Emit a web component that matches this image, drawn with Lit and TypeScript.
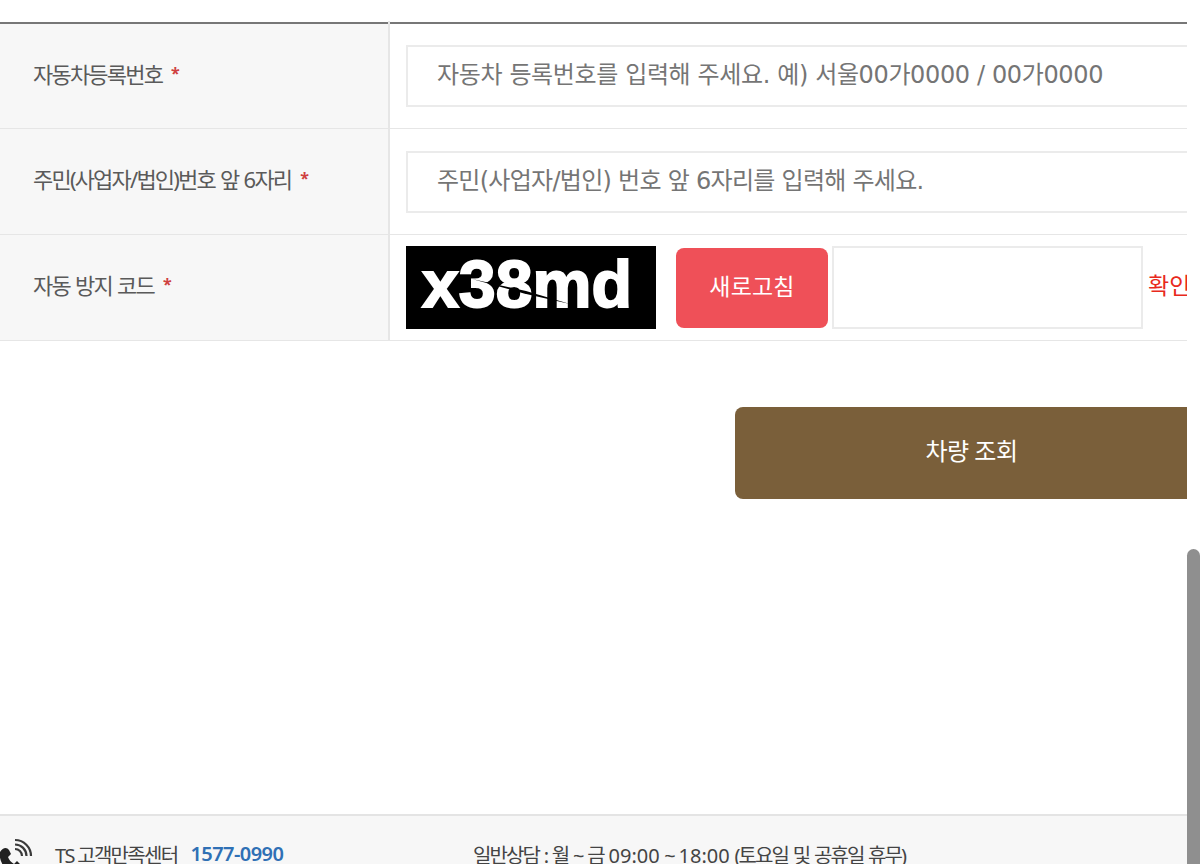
import { LitElement, html, css } from "lit";
import { customElement } from "lit/decorators.js";

@customElement("app-root")
export class AppRoot extends LitElement {
  static styles = css`
    :host { display: block; height: 864px; overflow: hidden; position: relative; background: #fff;
      font-family: "Noto Sans", "Noto Sans CJK KR", sans-serif; color: #555; }
    .page { width: 1187px; height: 864px; overflow: hidden; display: flex; flex-direction: column; }
    .table { margin-top: 22px; border-top: 2px solid #777; }
    .row { display: grid; grid-template-columns: 388px 2px 1fr; height: 105px; border-bottom: 1px solid #e6e6e6; box-sizing: content-box; }
    .row:first-child { height: 104px; }
    .row:first-child .sep { margin-top: -3px; }
    .row:first-child .td { padding-top: 21px; }
    .th { background: #f7f7f7; display: flex; align-items: center; padding-left: 33px; padding-bottom: 7px; font-size: 22px; letter-spacing: -1.8px; word-spacing: 1.2px; color: #5a5a5a; box-sizing: border-box; white-space: nowrap; }
    .star { color: #cf4040; font-size: 16px; font-weight: 700; margin-left: 9px; letter-spacing: 0; }
    .sep { background: #e6e6e6; }
    .td { padding: 22px 0 0 16px; min-width: 0; overflow: hidden; }
    input { display: block; box-sizing: border-box; border: 2px solid #ebebeb; background: #fff; font: inherit; outline: none; }
    .wide { width: 900px; height: 62px; padding: 0 0 2px 29px; font-size: 24px; font-family: "DejaVu Sans", "Noto Sans CJK KR", sans-serif; }
    .wide.plate { letter-spacing: -0.37px; }
    .wide.resident { letter-spacing: -0.72px; }
    .wide::placeholder { color: #757575; opacity: 1; }
    .captcha-cell { display: flex; align-items: center; padding: 0 0 0 16px; white-space: nowrap; min-width: 0; overflow: hidden; }
    .captcha { width: 250px; height: 83px; background: #000; flex: none; overflow: hidden; }
    .captcha svg { display: block; }
    .captcha text { filter: blur(0.7px); }
    .refresh { flex: none; width: 152px; height: 80px; margin-left: 20px; padding: 0 0 6px; border: 0; border-radius: 8px; background: #ef5058; color: #fff; font: inherit; font-size: 23px; letter-spacing: 0.2px; }
    .code { flex: none; width: 311px; height: 83px; margin-left: 4px; }
    .confirm { flex: none; margin-left: 5px; padding-bottom: 7px; color: #e8291c; font-size: 23px; }
    .actions { display: flex; margin-top: 66px; padding-left: 735px; }
    .search { flex: none; width: 472px; height: 92px; padding: 0 0 8px 1px; border: 0; border-radius: 8px; background: #7a5f3a; color: #fff; font: inherit; font-size: 24px; letter-spacing: -0.5px; }
    .footer { margin-top: auto; height: 50px; box-sizing: border-box; border-top: 2px solid #e4e4e4; background: #f7f7f7; display: flex; align-items: flex-start; padding-top: 24px; font-size: 20px; color: #444; white-space: nowrap; position: relative; }
    .phone { position: absolute; left: -3px; top: 22px; }
    .center { margin-left: 55px; letter-spacing: -1.7px; }
    .tel { margin-left: 13px; color: #2f70b5; font-weight: 600; letter-spacing: -0.55px; }
    .hours { position: absolute; left: 473px; top: 24px; letter-spacing: -1.9px; word-spacing: 1.4px; }
    .num { letter-spacing: 0; }
    .thumb { position: absolute; right: 0; top: 549px; width: 13px; height: 330px; border-radius: 7px; background: #8f8f8f; }
  `;

  render() {
    return html`
      <div class="page">
        <div class="table">
          <div class="row">
            <div class="th">자동차등록번호<span class="star">*</span></div><div class="sep"></div>
            <div class="td"><input class="wide plate" placeholder="자동차 등록번호를 입력해 주세요. 예) 서울00가0000 / 00가0000" /></div>
          </div>
          <div class="row">
            <div class="th">주민(사업자/법인)번호 앞 6자리<span class="star">*</span></div><div class="sep"></div>
            <div class="td"><input class="wide resident" placeholder="주민(사업자/법인) 번호 앞 6자리를 입력해 주세요." /></div>
          </div>
          <div class="row">
            <div class="th">자동 방지 코드<span class="star">*</span></div><div class="sep"></div>
            <div class="captcha-cell">
              <div class="captcha">
                <svg width="250" height="83" viewBox="0 0 250 83">
                  <text x="16" y="60.5" fill="#fff" stroke="#fff" stroke-width="2" font-family="Liberation Sans" font-weight="700" font-size="67" textLength="210" lengthAdjust="spacingAndGlyphs">x38md</text>
                  <path d="M66 33 L120 45 L164 58 L118 47.5 Z" fill="#000" />
                </svg>
              </div>
              <button class="refresh">새로고침</button>
              <input class="code" />
              <span class="confirm">확인</span>
            </div>
          </div>
        </div>
        <div class="actions"><button class="search">차량 조회</button></div>
        <div class="footer">
          <svg class="phone" width="40" height="30" viewBox="0 0 40 30">
            <path d="M3 14 C6 9 10 9 12 12 L14 16 L11 19 C12 22 14 24 17 26 L20 23 L25 28 L22 32 L10 32 C4 26 2 20 3 14 Z" fill="#222" />
            <g fill="none" stroke="#3a3a3a" stroke-width="2.2">
              <path d="M18 11 A7 7 0 0 1 25 18" />
              <path d="M18 6.5 A11.5 11.5 0 0 1 29.5 18" />
              <path d="M18 2 A16 16 0 0 1 34 18" />
            </g>
          </svg>
          <span class="center">TS 고객만족센터</span><span class="tel">1577-0990</span>
          <span class="hours">일반상담 : 월 ~ 금 <span class="num">09:00</span> ~ <span class="num">18:00</span> (토요일 및 공휴일 휴무)</span>
        </div>
      </div>
      <div class="thumb"></div>
    `;
  }
}
